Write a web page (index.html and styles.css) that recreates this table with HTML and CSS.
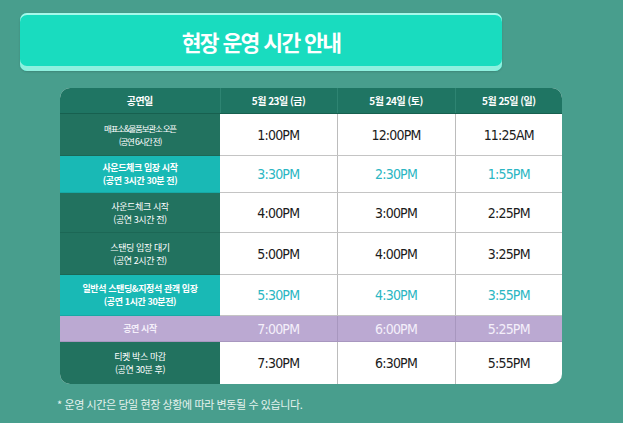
FILE: index.html
```html
<!DOCTYPE html>
<html lang="ko">
<head>
<meta charset="utf-8">
<title>현장 운영 시간 안내</title>
<link rel="stylesheet" href="styles.css">
</head>
<body>
<div class="page">
  <div class="banner"><h1 class="banner-title">현장 운영 시간 안내</h1></div>
  <div class="table-wrap">
    <table class="schedule">
      <colgroup>
        <col class="c1"><col class="c2"><col class="c3"><col class="c4">
      </colgroup>
      <thead>
        <tr class="head">
          <th>공연일</th><th>5월 23일 (금)</th><th>5월 24일 (토)</th><th>5월 25일 (일)</th>
        </tr>
      </thead>
      <tbody>
        <tr class="r-normal h42">
          <th><span class="lbl tight">매표소&amp;물품보관소 오픈</span><span class="sub tight">(공연 6시간 전)</span></th>
          <td>1:00PM</td><td>12:00PM</td><td>11:25AM</td>
        </tr>
        <tr class="r-hl h37">
          <th><span class="lbl">사운드체크 입장 시작</span><span class="sub">(공연 3시간 30분 전)</span></th>
          <td>3:30PM</td><td>2:30PM</td><td>1:55PM</td>
        </tr>
        <tr class="r-normal h40">
          <th><span class="lbl">사운드체크 시작</span><span class="sub">(공연 3시간 전)</span></th>
          <td>4:00PM</td><td>3:00PM</td><td>2:25PM</td>
        </tr>
        <tr class="r-normal h42">
          <th><span class="lbl">스탠딩 입장 대기</span><span class="sub">(공연 2시간 전)</span></th>
          <td>5:00PM</td><td>4:00PM</td><td>3:25PM</td>
        </tr>
        <tr class="r-hl h41">
          <th><span class="lbl">일반석 스탠딩&amp;지정석 관객 입장</span><span class="sub">(공연 1시간 30분전)</span></th>
          <td>5:30PM</td><td>4:30PM</td><td>3:55PM</td>
        </tr>
        <tr class="r-start h26">
          <th><span class="lbl">공연 시작</span></th>
          <td>7:00PM</td><td>6:00PM</td><td>5:25PM</td>
        </tr>
        <tr class="r-normal h42 last">
          <th><span class="lbl">티켓 박스 마감</span><span class="sub">(공연 30분 후)</span></th>
          <td>7:30PM</td><td>6:30PM</td><td>5:55PM</td>
        </tr>
      </tbody>
    </table>
  </div>
  <p class="note">* 운영 시간은 당일 현장 상황에 따라 변동될 수 있습니다.</p>
</div>
</body>
</html>
```

FILE: styles.css
```css
html, body {
  margin: 0;
  padding: 0;
}
body {
  background: #489e8d;
  width: 623px;
  height: 423px;
  overflow: hidden;
  font-family: "Noto Sans CJK KR", "Noto Sans", sans-serif;
}
.page {
  padding-top: 13px;
}
.banner {
  margin-left: 20px;
  width: 482px;
  height: 58px;
  box-sizing: border-box;
  border-radius: 7px;
  background: #19dcbf;
  box-shadow: inset 0 2px 0 #a6f8ea, inset 0 -5px 0 #8ef1df, 0 1px 2px rgba(0,0,0,0.15);
  display: flex;
  align-items: center;
  justify-content: center;
}
.banner-title {
  margin: 0;
  color: #ffffff;
  font-size: 21.5px;
  font-weight: 700;
  letter-spacing: -1.6px;
  line-height: 1;
  padding-bottom: 1px;
}
.table-wrap {
  margin-top: 17px;
  margin-left: 60px;
  width: 502px;
  border-radius: 10px;
  overflow: hidden;
  background: #ffffff;
}
.schedule {
  width: 502px;
  border-collapse: collapse;
  table-layout: fixed;
}
.c1 { width: 160px; }
.c2 { width: 117px; }
.c3 { width: 118px; }
.c4 { width: 107px; }

.schedule th, .schedule td {
  padding: 0;
  text-align: center;
  vertical-align: middle;
}
.head th {
  height: 25px;
  background: #1f7563;
  color: #ffffff;
  font-size: 10px;
  font-weight: 700;
  letter-spacing: -0.5px;
  border-bottom: 1px solid #17604f;
  border-left: 1px solid #2e8472;
}
.head th:first-child { border-left: none; }

tbody th {
  color: #ffffff;
  font-weight: 400;
  background: #22725f;
  border-bottom: 1px solid #1c6755;
}
tbody td {
  font-family: "DejaVu Sans Condensed", "DejaVu Sans", sans-serif;
  font-stretch: condensed;
  font-size: 14px;
  color: #1c1c1c;
  border-left: 1px solid #bcbcbc;
  border-bottom: 1px solid #c4c4c4;
  letter-spacing: -0.8px;
}
tbody th:first-child + td { border-left: none; }
.lbl, .sub {
  display: block;
  font-size: 9px;
  line-height: 13px;
  letter-spacing: -0.4px;
}
.tight {
  letter-spacing: -1.2px;
  font-size: 8.5px;
}
.h42 th, .h42 td { height: 41px; }
.h37 th, .h37 td { height: 36px; }
.h40 th, .h40 td { height: 39px; }
.h41 th, .h41 td { height: 40px; }
.h26 th, .h26 td { height: 25px; }
.last th, .last td { border-bottom: none; height: 42px; }

.r-hl th {
  background: #19b9b5;
  font-weight: 700;
  border-bottom-color: #16a9a5;
}
.r-hl td {
  color: #2bb6c3;
}
.r-start th, .r-start td {
  background: #bba9d2;
  color: #f4effa;
  border-bottom: 1px solid #a897bf;
}
.r-start th {
  font-weight: 700;
}
.r-start td {
  border-left-color: #a897bf;
}
.note {
  margin: 13px 0 0 57px;
  color: #e6f3ef;
  font-size: 11px;
  letter-spacing: -0.4px;
  line-height: 14px;
}
```
